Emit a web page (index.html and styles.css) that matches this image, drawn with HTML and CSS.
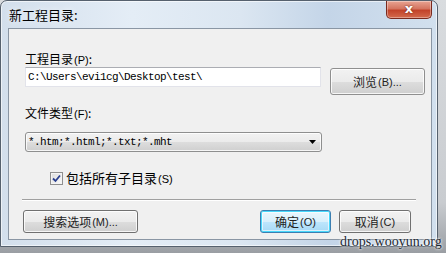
FILE: index.html
```html
<!DOCTYPE html>
<html lang="zh">
<head>
<meta charset="utf-8">
<title>新工程目录</title>
<link rel="stylesheet" href="styles.css">
</head>
<body>
<div class="window">
  <div class="titlebar">
    <span class="title">新工程目录:</span>
    <div class="close">x</div>
  </div>
  <div class="client">
    <div class="form">
      <div class="label">工程目录<span class="acc">(P)</span>:</div>
      <div class="row">
        <div class="input">C:\Users\evi1cg\Desktop\test\</div>
        <div class="btn browse">浏览<span class="acc">(B)...</span></div>
      </div>
      <div class="label label2">文件类型<span class="acc">(F)</span>:</div>
      <div class="select">
        <span class="mono">*.htm;*.html;*.txt;*.mht</span>
        <svg class="arrow" width="7" height="4" viewBox="0 0 7 4"><path d="M0 0H7L3.5 4Z" fill="#000"/></svg>
      </div>
      <div class="check">
        <span class="box"><svg width="9" height="9" viewBox="0 0 9 9"><path d="M1 4.5L3.5 7L8 1.5" fill="none" stroke="#2a3f8f" stroke-width="1.8"/></svg></span>
        <span>包括所有子目录<span class="acc">(S)</span></span>
      </div>
    </div>
    <div class="sep"></div>
    <div class="buttons">
      <div class="btn search">搜索选项<span class="acc">(M)...</span></div>
      <div class="spacer"></div>
      <div class="btn ok">确定<span class="acc">(O)</span></div>
      <div class="btn cancel">取消<span class="acc">(C)</span></div>
    </div>
  </div>
</div>
<div class="watermark">drops.wooyun.org</div>
</body>
</html>
```
FILE: styles.css
```css
html, body {
  margin: 0;
  padding: 0;
}
body {
  width: 446px;
  height: 253px;
  overflow: hidden;
  background: linear-gradient(to bottom, #d9dcdf 0%, #c9ccd0 80%, #9a9ea3 100%);
  font-family: "Noto Sans CJK SC", "Liberation Sans", sans-serif;
  font-size: 12px;
  color: #000;
  position: relative;
}
.window {
  box-sizing: border-box;
  width: 438px;
  height: 247px;
  border: 1px solid #56616e;
  border-radius: 7px 7px 0 0;
  padding: 0 5px 6px 7px;
  background: linear-gradient(to right, #d3dfec 0%, #e4edf6 30%, #dbe6f1 55%, #c4d5e8 75%, #d2e0ee 100%);
  box-shadow: inset 0 0 0 1px rgba(255,255,255,0.6);
}
.titlebar {
  height: 27px;
  display: flex;
  justify-content: space-between;
  align-items: flex-start;
}
.title {
  font-size: 13px;
  line-height: 27px;
  margin-left: 1px;
  color: #000;
  text-shadow: 0 0 6px rgba(255,255,255,0.9);
}
.close {
  box-sizing: border-box;
  width: 46px;
  height: 18px;
  margin-right: 0;
  border: 1px solid #7a2a1e;
  border-top: none;
  border-radius: 0 0 5px 5px;
  background: linear-gradient(to bottom, #e8a493 0%, #d47560 45%, #c2432a 55%, #d46a4c 100%);
  color: #fff;
  font-family: "DejaVu Sans", sans-serif;
  font-weight: bold;
  font-size: 13px;
  line-height: 15px;
  text-align: center;
  text-shadow: 0 0 2px #5a1a10;
  box-shadow: inset 0 0 0 1px rgba(255,255,255,0.35);
}
.client {
  box-sizing: border-box;
  width: 424px;
  height: 212px;
  border: 1px solid #8a96a4;
  background: #f0f0f0;
  display: flex;
  flex-direction: column;
}
.form {
  padding: 22px 0 0 16px;
  display: flex;
  flex-direction: column;
  align-items: flex-start;
}
.label {
  line-height: 16px;
  height: 16px;
}
.acc {
  font-family: "Liberation Sans", sans-serif;
  font-size: 11px;
  margin-left: 1px;
}
.row {
  display: flex;
  align-items: flex-start;
}
.input {
  box-sizing: border-box;
  width: 296px;
  height: 20px;
  border: 1px solid #e2e3ea;
  border-top-color: #abadb3;
  background: #fff;
  padding-left: 2px;
  font-family: "Liberation Mono", monospace;
  font-size: 11px;
  letter-spacing: -0.6px;
  line-height: 18px;
}
.mono {
  font-family: "Liberation Mono", monospace;
  font-size: 11px;
  letter-spacing: -0.6px;
}
.btn {
  box-sizing: border-box;
  height: 23px;
  border: 1px solid #707070;
  border-radius: 3px;
  background: linear-gradient(to bottom, #f2f2f2 0%, #ebebeb 50%, #dddddd 51%, #cfcfcf 100%);
  box-shadow: inset 0 0 0 1px rgba(255,255,255,0.8);
  display: flex;
  align-items: center;
  justify-content: center;
  line-height: 16px;
  color: #222;
}
.browse {
  width: 95px;
  height: 27px;
  margin-left: 9px;
  margin-top: 1px;
  border-color: #8f8f8f;
}
.label2 {
  margin-top: 10px;
}
.select {
  box-sizing: border-box;
  width: 297px;
  height: 20px;
  margin-top: 11px;
  border: 1px solid #8e8f8f;
  border-radius: 3px;
  background: linear-gradient(to bottom, #f2f2f2 0%, #ebebeb 50%, #dddddd 51%, #cfcfcf 100%);
  box-shadow: inset 0 0 0 1px rgba(255,255,255,0.8);
  display: flex;
  align-items: center;
  justify-content: space-between;
  padding: 0 5px 0 2px;
}
.arrow {
  display: block;
}
.check {
  margin-top: 18px;
  margin-left: 25px;
  display: flex;
  align-items: center;
  line-height: 16px;
  font-size: 13px;
}
.box {
  box-sizing: border-box;
  width: 13px;
  height: 13px;
  border: 1px solid #8f8f8f;
  background: linear-gradient(135deg, #dcdcdc, #fafafa);
  box-shadow: inset 0 0 0 1px #f4f4f4;
  display: flex;
  align-items: center;
  justify-content: center;
  margin-right: 3px;
}
.box svg {
  display: block;
}
.sep {
  height: 1px;
  margin: 12px 15px 0 13px;
  background: #a0a0a0;
  border-bottom: 1px solid #fff;
}
.buttons {
  display: flex;
  margin: 9px 0 0 14px;
  padding-right: 20px;
}
.spacer {
  flex: 1;
}
.search {
  width: 115px;
}
.ok {
  width: 71px;
  border-color: #3c7fb1;
  box-shadow: inset 0 0 0 1px #48d8fb, inset 0 0 0 2px rgba(255,255,255,0.6);
  background: linear-gradient(to bottom, #eaf6fd 0%, #d9f0fc 50%, #bee6fd 51%, #a7d9f5 100%);
}
.cancel {
  width: 72px;
  margin-left: 8px;
}
.watermark {
  position: absolute;
  left: 340px;
  top: 233px;
  font-family: "Liberation Serif", serif;
  font-size: 14px;
  line-height: 18px;
  color: #1f2a33;
  text-shadow: 0 0 2px #fff, 0 0 3px #fff;
}
```
